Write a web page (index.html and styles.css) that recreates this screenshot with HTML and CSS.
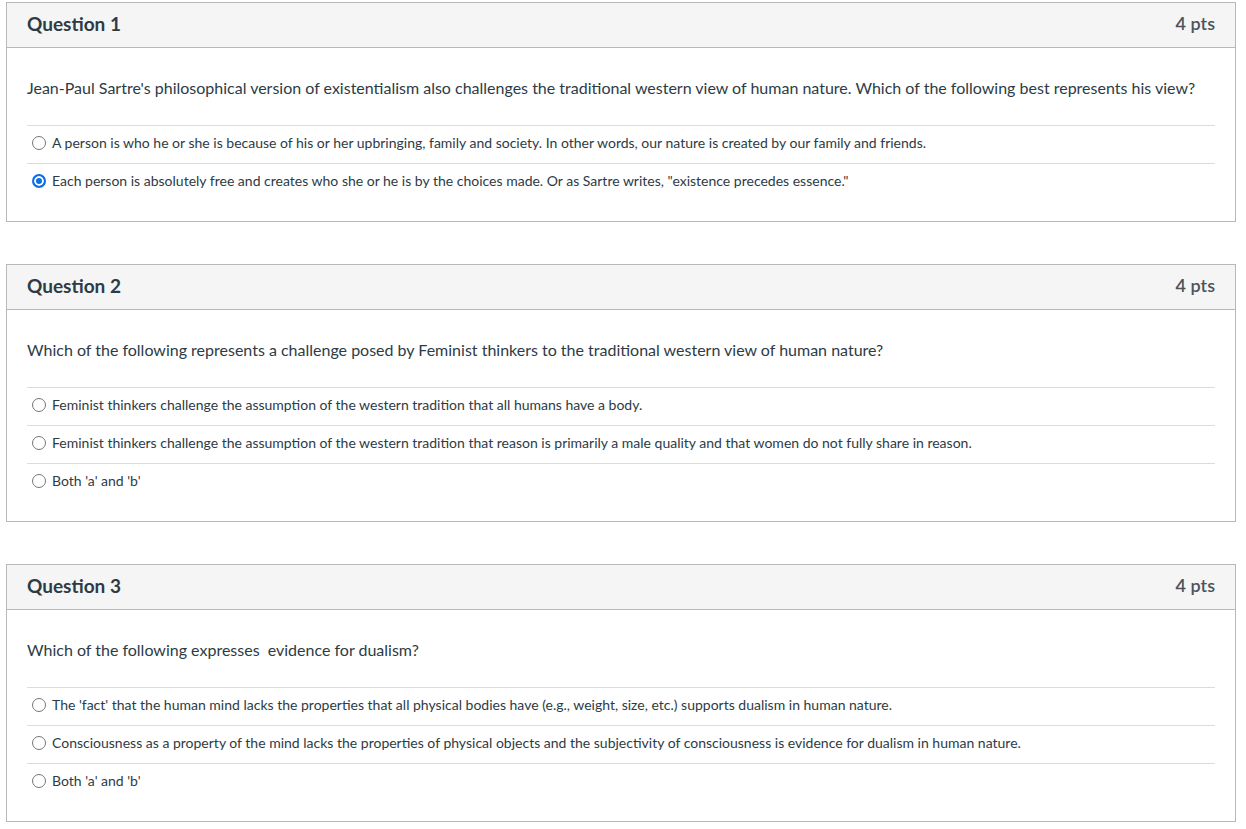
FILE: index.html
```html
<!DOCTYPE html>
<html lang="en">
<head>
    <meta charset="UTF-8">
    <title>Quiz</title>
    <link rel="stylesheet" href="styles.css">
</head>
<body>
    <div class="quiz">

        <!-- Question 1 -->
        <div class="question">
            <div class="question-header">
                <span class="question-name">Question 1</span>
                <span class="question-points">4 pts</span>
            </div>
            <div class="question-body">
                <p class="question-text">Jean-Paul Sartre's philosophical version of existentialism also challenges the traditional western view of human nature. Which of the following best represents his view?</p>
                <div class="answers">
                    <div class="answer"><span class="radio"></span>A person is who he or she is because of his or her upbringing, family and society. In other words, our nature is created by our family and friends.</div>
                    <div class="answer"><span class="radio checked"></span>Each person is absolutely free and creates who she or he is by the choices made. Or as Sartre writes, "existence precedes essence."</div>
                </div>
            </div>
        </div>

        <!-- Question 2 -->
        <div class="question">
            <div class="question-header">
                <span class="question-name">Question 2</span>
                <span class="question-points">4 pts</span>
            </div>
            <div class="question-body">
                <p class="question-text">Which of the following represents a challenge posed by Feminist thinkers to the traditional western view of human nature?</p>
                <div class="answers">
                    <div class="answer"><span class="radio"></span>Feminist thinkers challenge the assumption of the western tradition that all humans have a body.</div>
                    <div class="answer"><span class="radio"></span>Feminist thinkers challenge the assumption of the western tradition that reason is primarily a male quality and that women do not fully share in reason.</div>
                    <div class="answer"><span class="radio"></span>Both 'a' and 'b'</div>
                </div>
            </div>
        </div>

        <!-- Question 3 -->
        <div class="question">
            <div class="question-header">
                <span class="question-name">Question 3</span>
                <span class="question-points">4 pts</span>
            </div>
            <div class="question-body">
                <p class="question-text">Which of the following expresses&nbsp; evidence for dualism?</p>
                <div class="answers">
                    <div class="answer"><span class="radio"></span>The 'fact' that the human mind lacks the properties that all physical bodies have (e.g., weight, size, etc.) supports dualism in human nature.</div>
                    <div class="answer"><span class="radio"></span>Consciousness as a property of the mind lacks the properties of physical objects and the subjectivity of consciousness is evidence for dualism in human nature.</div>
                    <div class="answer"><span class="radio"></span>Both 'a' and 'b'</div>
                </div>
            </div>
        </div>

    </div>
</body>
</html>
```

FILE: styles.css
```css
body {
    margin: 0;
    font-family: Lato, "Open Sans", sans-serif;
    color: #2d3b45;
    background: #fff;
}
.quiz {
    padding: 2px 10px 0 6px;
    display: flex;
    flex-direction: column;
    gap: 42px;
}
.question {
    border: 1px solid #b8b8b8;
}
.question-header {
    display: flex;
    justify-content: space-between;
    align-items: center;
    height: 40px;
    padding: 0 20px 4px;
    background: #f5f5f5;
    border-bottom: 1px solid #b8b8b8;
}
.question-name {
    font-size: 19px;
    font-weight: bold;
}
.question-points {
    font-size: 18px;
    font-weight: 600;
    color: #4a545c;
}
.question-body {
    padding: 28px 20px 20px;
}
.question-text {
    margin: 0 0 25px;
    font-size: 16px;
    line-height: 24px;
}
.answer {
    display: flex;
    align-items: center;
    height: 33px;
    padding-bottom: 4px;
    border-top: 1px solid #dcdcdc;
    font-size: 14px;
}
.radio {
    width: 14px;
    height: 14px;
    box-sizing: border-box;
    border: 1px solid #767676;
    border-radius: 50%;
    margin: 0 6px 0 5px;
    flex-shrink: 0;
    background: #fff;
}
.radio.checked {
    border: 2px solid #0b6fe8;
    box-shadow: inset 0 0 0 2px #fff;
    background: #0b6fe8;
}
```
